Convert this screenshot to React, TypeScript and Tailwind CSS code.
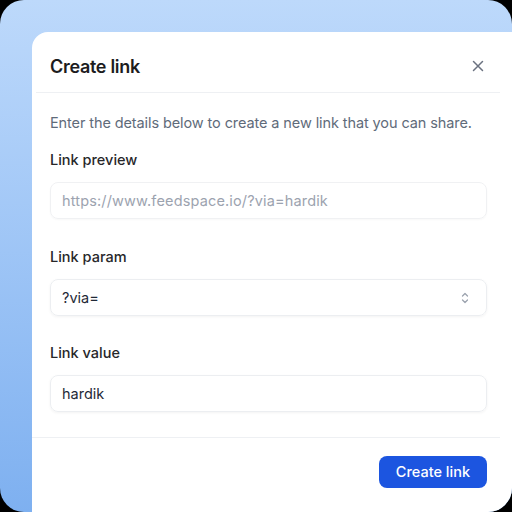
import React from "react";

function Chevrons() {
  return (
    <svg width="10" height="14" viewBox="0 0 10 14" fill="none" stroke="#9ca3af" strokeWidth="1.3" strokeLinecap="round" strokeLinejoin="round">
      <path d="M2.5 5 L5 2.5 L7.5 5" />
      <path d="M2.5 9 L5 11.5 L7.5 9" />
    </svg>
  );
}

export default function App() {
  return (
    <div className="w-[512px] h-[512px] bg-black" style={{ fontFamily: "Inter, 'Noto Sans', sans-serif" }}>
      <div className="w-full h-full rounded-[24px] overflow-hidden bg-gradient-to-b from-[#bdd9fb] to-[#7eb0f0] flex pt-[32px] pl-[32px]">
        <div className="flex-1 bg-white rounded-tl-[16px] flex flex-col">
          <div className="h-[60px] pt-[8px] flex items-center justify-between pl-[18px] pr-[28px]">
            <div className="text-[18px] font-semibold text-[#1c1c1e] tracking-[-0.3px]">Create link</div>
            <svg width="12" height="12" viewBox="0 0 12 12" stroke="#6b7280" strokeWidth="1.5" strokeLinecap="round">
              <path d="M1.5 1.5 L10.5 10.5 M10.5 1.5 L1.5 10.5" />
            </svg>
          </div>
          <div className="h-px bg-[#eef0f3] ml-[4px] mr-[12px]" />
          <div className="pl-[18px] pr-[25px] flex flex-col">
            <p className="mt-[19px] text-[14.5px] leading-[22px] tracking-[-0.1px] text-[#5f6b7a]">Enter the details below to create a new link that you can share.</p>
            <label className="mt-[15px] text-[14.5px] leading-[22px] font-medium text-[#27272a]">Link preview</label>
            <div className="mt-[11px] h-[37px] rounded-[8px] border border-[#f0f1f3] shadow-[0_1px_2px_rgba(0,0,0,0.03)] flex items-center px-[11px] text-[14.5px] tracking-[0.15px] text-[#9ca3af]">
              https://www.feedspace.io/?via=hardik
            </div>
            <label className="mt-[27px] text-[14.5px] leading-[22px] font-medium text-[#27272a]">Link param</label>
            <div className="mt-[11px] h-[37px] rounded-[8px] border border-[#eceef1] shadow-[0_1px_3px_rgba(0,0,0,0.05)] flex items-center justify-between px-[11px] text-[14.5px] text-[#1f2937]">
              <span>?via=</span>
              <span className="mr-[5px]"><Chevrons /></span>
            </div>
            <label className="mt-[26px] text-[14.5px] leading-[22px] font-medium text-[#27272a]">Link value</label>
            <div className="mt-[11px] h-[37px] rounded-[8px] border border-[#eceef1] shadow-[0_1px_3px_rgba(0,0,0,0.05)] flex items-center px-[11px] text-[14.5px] text-[#1f2937]">
              hardik
            </div>
          </div>
          <div className="mt-[25px] h-px bg-[#eef0f3] mr-[12px]" />
          <div className="pl-[18px] pr-[25px] flex justify-end mt-[18px]">
            <button className="h-[32px] px-[17px] rounded-[8px] bg-[#1c55e0] text-white text-[14.5px] font-medium">Create link</button>
          </div>
        </div>
      </div>
    </div>
  );
}
